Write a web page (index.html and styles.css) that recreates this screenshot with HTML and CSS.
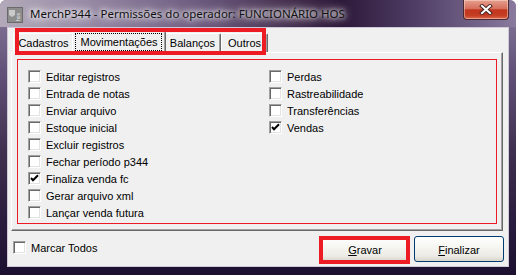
FILE: index.html
```html
<!DOCTYPE html>
<html lang="pt">
<head>
    <meta charset="UTF-8">
    <title>MerchP344</title>
    <link rel="stylesheet" href="styles.css">
</head>
<body>
<div class="window">
    <div class="titlebar">
        <span class="app-icon">
            <svg width="16" height="16" viewBox="0 0 16 16">
                <rect x="0.5" y="0.5" width="15" height="15" fill="#8d8d8d" stroke="#6a6a6a"/>
                <path d="M2 3 L8 3 L8 8 L5 10 L2 8 Z" fill="#c9c9c9"/>
                <text x="12.5" y="14" font-size="5" fill="#e8e8e8" font-family="Liberation Sans, sans-serif" transform="rotate(-90 12.5 14)">hos</text>
            </svg>
        </span>
        <span class="title">MerchP344 - Permissões do operador: FUNCIONÁRIO HOS</span>
        <span class="close-btn">
            <svg width="14" height="11" viewBox="0 0 14 11">
                <path d="M3 2 L11 9 M11 2 L3 9" stroke="#4a2420" stroke-width="4" stroke-linecap="square"/>
                <path d="M3 2 L11 9 M11 2 L3 9" stroke="#fff" stroke-width="2" stroke-linecap="square"/>
            </svg>
        </span>
    </div>
    <div class="client">
        <div class="tabs">
            <div class="tab-strip">
                <div class="tab w-cad">Cadastros</div>
                <div class="tab active"><span class="focus"></span>Movimentações</div>
                <div class="tab w-bal">Balanços</div>
                <div class="tab w-out">Outros</div>
                <div class="mark mark-tabs"></div>
            </div>
            <div class="tab-page">
                <div class="group">
                    <div class="col">
                        <div class="check"><span class="box"></span>Editar registros</div>
                        <div class="check"><span class="box"></span>Entrada de notas</div>
                        <div class="check"><span class="box"></span>Enviar arquivo</div>
                        <div class="check"><span class="box"></span>Estoque inicial</div>
                        <div class="check"><span class="box"></span>Excluir registros</div>
                        <div class="check"><span class="box"></span>Fechar período p344</div>
                        <div class="check"><span class="box checked"><svg width="11" height="11" viewBox="0 0 11 11"><path d="M2 5 L4 7.2 L9 2.2" fill="none" stroke="#000" stroke-width="2"/></svg></span>Finaliza venda fc</div>
                        <div class="check"><span class="box"></span>Gerar arquivo xml</div>
                        <div class="check"><span class="box"></span>Lançar venda futura</div>
                    </div>
                    <div class="col">
                        <div class="check"><span class="box"></span>Perdas</div>
                        <div class="check"><span class="box"></span>Rastreabilidade</div>
                        <div class="check"><span class="box"></span>Transferências</div>
                        <div class="check"><span class="box checked"><svg width="11" height="11" viewBox="0 0 11 11"><path d="M2 5 L4 7.2 L9 2.2" fill="none" stroke="#000" stroke-width="2"/></svg></span>Vendas</div>
                    </div>
                </div>
            </div>
        </div>
        <div class="footer">
            <div class="check all"><span class="box"></span>Marcar Todos</div>
            <div class="buttons">
                <div class="btn marked"><u>G</u>ravar</div>
                <div class="btn"><u>F</u>inalizar</div>
            </div>
        </div>
    </div>
</div>
</body>
</html>
```
FILE: styles.css
```css
body {
    margin: 0;
    background-color: #fff;
    font-family: "Liberation Sans", Arial, sans-serif;
    font-size: 11px;
    color: #000;
}

.window {
    width: 516px;
    height: 275px;
    box-sizing: border-box;
    border-radius: 6px 6px 0 0;
    background: linear-gradient(180deg, #8a7e9c 0px, #62527a 70px, #40304f 150px, #2a1c3e 220px, #1c1030 275px);
    overflow: hidden;
}

.titlebar {
    height: 27px;
    display: flex;
    align-items: center;
    background: linear-gradient(90deg, #b2aab9 0%, #9c90aa 14%, #6e5c80 38%, #45304f 56%, #2c1838 66%, #4e3c64 80%, #8a7a9e 100%);
    border-radius: 6px 6px 0 0;
}

.app-icon {
    width: 16px;
    height: 16px;
    margin-left: 7px;
    align-self: flex-start;
    margin-top: 7px;
}

.title {
    margin-left: 7px;
    font-family: "Noto Sans", sans-serif;
    font-size: 11.5px;
    color: #111;
    text-shadow: 0 0 4px #fff, 0 0 8px #fff, 0 0 12px rgba(255, 255, 255, 0.8);
}

.close-btn {
    margin-left: auto;
    margin-right: 7px;
    align-self: flex-start;
    width: 46px;
    height: 20px;
    box-sizing: border-box;
    border: 1px solid #4a2a30;
    border-top: none;
    border-radius: 0 0 4px 4px;
    background: linear-gradient(180deg, #e6a090 0%, #d6705c 45%, #c2361f 52%, #c43c22 80%, #dc6a4c 100%);
    box-shadow: inset 0 0 0 1px rgba(255, 230, 220, 0.45);
    display: flex;
    align-items: center;
    justify-content: center;
}

.client {
    height: 238px;
    margin: 0 7px;
    border: 1px solid #cfc8d6;
    background-color: #f0f0f0;
}

.tabs {
    margin: 3px 0 0 3px;
    width: 492px;
}

.tab-strip {
    position: relative;
    height: 21px;
    margin-left: 2px;
    display: flex;
    align-items: flex-end;
}

.tab {
    position: relative;
    height: 19px;
    box-sizing: border-box;
    border: 1px solid #fff;
    border-right-color: #696969;
    border-bottom: none;
    border-radius: 2px 2px 0 0;
    box-shadow: inset -1px 0 #a0a0a0;
    background-color: #f0f0f0;
    display: flex;
    align-items: center;
    justify-content: center;
    padding-bottom: 1px;
}

.w-cad { width: 61px; }
.w-bal { width: 57px; }
.w-out { width: 47px; }

.tab.active {
    width: 94px;
    height: 22px;
    margin: 0 -2px -1px;
    z-index: 1;
    padding-bottom: 2px;
}

.focus {
    position: absolute;
    top: 1px;
    left: 2px;
    right: 3px;
    bottom: 2px;
    border: 1px dotted #000;
}

.mark {
    position: absolute;
    border: 4px solid #ed1c24;
    box-sizing: border-box;
    z-index: 2;
}

.mark-tabs {
    left: 2px;
    top: -3px;
    width: 251px;
    height: 27px;
}

.tab-page {
    height: 179px;
    box-sizing: border-box;
    border: 1px solid #fff;
    border-right-color: #696969;
    border-bottom-color: #696969;
    box-shadow: inset -1px -1px #a0a0a0;
}

.group {
    width: 480px;
    height: 165px;
    margin: 6px 0 0 5px;
    box-sizing: border-box;
    border: 1px solid #ed1c24;
    padding: 8px 0 0 10px;
    display: grid;
    grid-template-columns: 241px 1fr;
}

.check {
    height: 17px;
    display: flex;
    align-items: center;
    gap: 5px;
    white-space: nowrap;
}

.box {
    width: 13px;
    height: 13px;
    box-sizing: border-box;
    border: 1px solid;
    border-color: #a0a0a0 #fff #fff #a0a0a0;
    box-shadow: inset 1px 1px #696969, inset -1px -1px #e3e3e3;
    background-color: #fff;
    display: flex;
    align-items: center;
    justify-content: center;
}

.footer {
    display: flex;
    align-items: flex-start;
    padding-left: 5px;
}

.check.all {
    margin-top: 8px;
}

.buttons {
    margin-left: auto;
    margin-right: 4px;
    margin-top: 5px;
    display: flex;
    gap: 4px;
}

.btn {
    position: relative;
    width: 90px;
    height: 26px;
    box-sizing: border-box;
    border: 1px solid #003c74;
    border-radius: 3px;
    background: linear-gradient(180deg, #fff 0%, #f6f6f2 40%, #ebeae4 80%, #d8d4ca 100%);
    display: flex;
    align-items: center;
    justify-content: center;
    padding-top: 1px;
}

.marked::after {
    content: "";
    position: absolute;
    left: -2px;
    top: -1px;
    right: -1px;
    bottom: -3px;
    border: 4px solid #ed1c24;
}
```
